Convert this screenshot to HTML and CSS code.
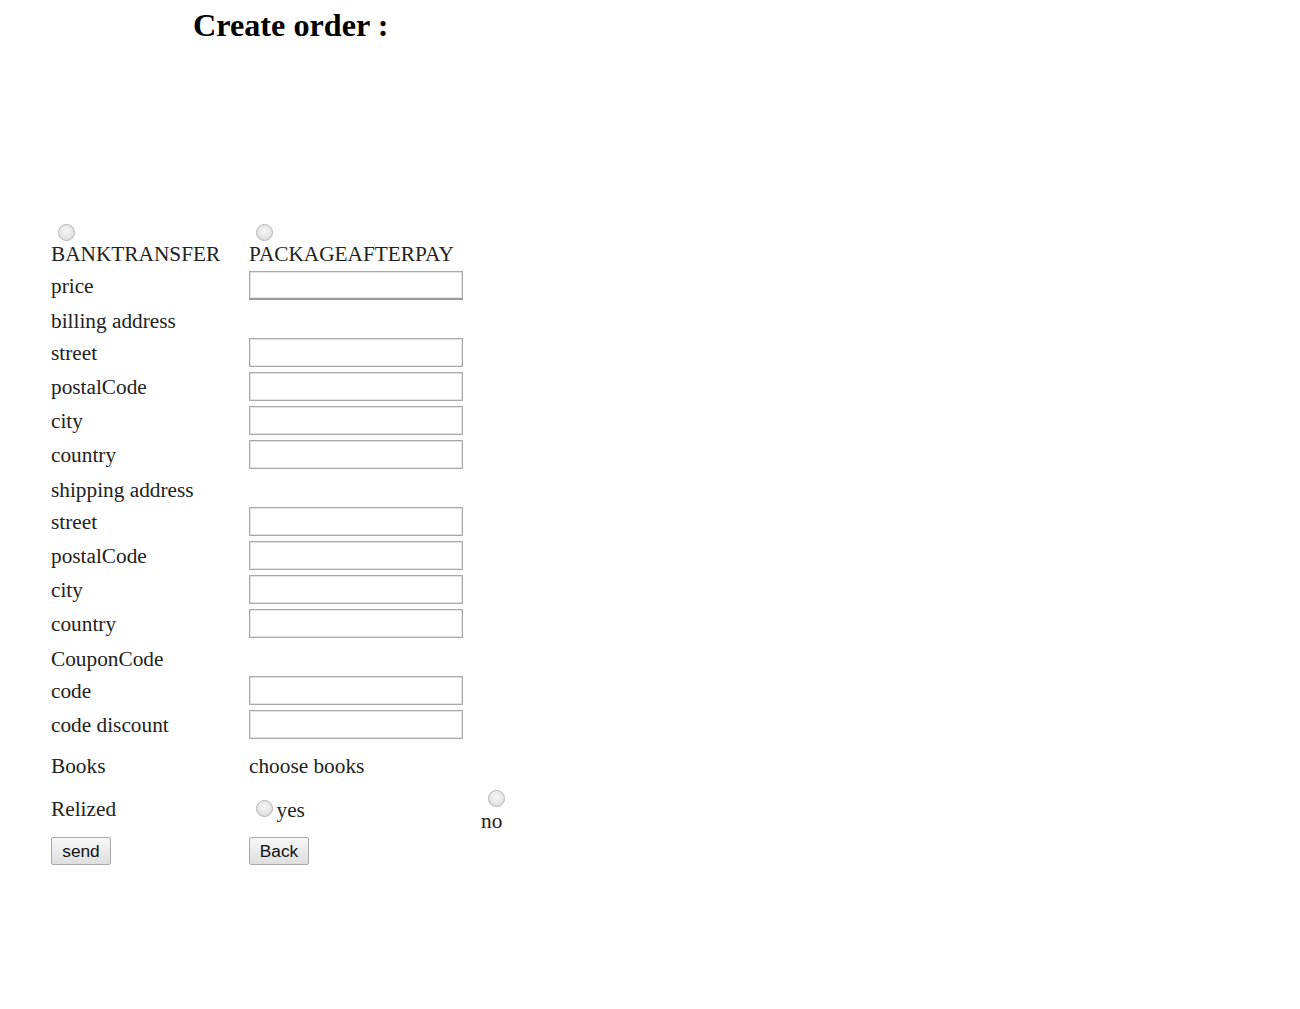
FILE: index.html
```html
<!DOCTYPE html>
<html>
<head>
<meta charset="utf-8">
<title>Create order</title>
<link rel="stylesheet" href="styles.css">
</head>
<body>
<h2 class="title">Create order :</h2>
<form class="form">
  <div class="row row-pay">
    <div class="cell"><span class="radio block"></span><span class="line">BANKTRANSFER</span></div>
    <div class="cell"><span class="radio block"></span><span class="line">PACKAGEAFTERPAY</span></div>
  </div>
  <div class="row"><div class="cell">price</div><div class="cell"><input class="field field-price" type="text"></div></div>
  <div class="row head"><div class="cell">billing address</div></div>
  <div class="row"><div class="cell">street</div><div class="cell"><input class="field" type="text"></div></div>
  <div class="row"><div class="cell">postalCode</div><div class="cell"><input class="field" type="text"></div></div>
  <div class="row"><div class="cell">city</div><div class="cell"><input class="field" type="text"></div></div>
  <div class="row"><div class="cell">country</div><div class="cell"><input class="field" type="text"></div></div>
  <div class="row head"><div class="cell">shipping address</div></div>
  <div class="row"><div class="cell">street</div><div class="cell"><input class="field" type="text"></div></div>
  <div class="row"><div class="cell">postalCode</div><div class="cell"><input class="field" type="text"></div></div>
  <div class="row"><div class="cell">city</div><div class="cell"><input class="field" type="text"></div></div>
  <div class="row"><div class="cell">country</div><div class="cell"><input class="field" type="text"></div></div>
  <div class="row head"><div class="cell">CouponCode</div></div>
  <div class="row"><div class="cell">code</div><div class="cell"><input class="field" type="text"></div></div>
  <div class="row"><div class="cell">code discount</div><div class="cell"><input class="field" type="text"></div></div>
  <div class="row books"><div class="cell">Books</div><div class="cell">choose books</div></div>
  <div class="row relized">
    <div class="cell cell-up">Relized</div>
    <div class="cell cell-up cell-yes"><span class="radio inline"></span><span class="yes">yes</span></div>
    <div class="cell cell-no"><span class="radio block"></span><span class="line">no</span></div>
  </div>
  <div class="row buttons">
    <div class="cell"><button type="button" class="btn">send</button></div>
    <div class="cell"><button type="button" class="btn">Back</button></div>
  </div>
</form>
</body>
</html>
```
FILE: styles.css
```css
html, body {
  margin: 0;
  padding: 0;
  background: #fff;
}
body {
  font-family: "Liberation Serif", "Times New Roman", serif;
  font-size: 21.3px;
  color: #222;
}
.title {
  margin: 0;
  padding: 7px 0 0 193px;
  font-size: 32.2px;
  line-height: 36px;
  font-weight: bold;
  color: #000;
}
.form {
  display: flex;
  flex-direction: column;
  gap: 5px;
  padding: 180.5px 0 0 51px;
}
.row {
  display: grid;
  grid-template-columns: 198px 232px auto;
  align-items: center;
  line-height: 24px;
}
.cell {
  display: flex;
  flex-direction: column;
  align-items: flex-start;
}
.row-pay {
  align-items: start;
}
.head {
  padding-top: 4px;
}
.books {
  padding-top: 9.5px;
}
.relized {
  padding-top: 7px;
}
.cell-up {
  margin-top: -4px;
}
.cell-yes {
  flex-direction: row;
  align-items: center;
}
.cell-no .radio.block {
  margin-bottom: 2.5px;
}
.buttons {
  margin-top: -1px;
}
.line {
  display: block;
}
.radio {
  width: 15px;
  height: 15px;
  border: 1px solid #b3b3b3;
  border-radius: 50%;
  background: radial-gradient(circle at 50% 40%, #f6f6f6 0%, #e6e6e6 55%, #d4d4d4 100%);
  box-sizing: content-box;
  flex: none;
}
.radio.block {
  margin: 0 0 1.5px 6.5px;
}
.radio.inline {
  margin: 0 4px 0 6.5px;
  position: relative;
  top: -1px;
}
.yes {
  position: relative;
  top: 1px;
}
.field {
  box-sizing: border-box;
  width: 214px;
  height: 29px;
  margin: 0;
  border: 1px solid #a9a9a9;
  box-shadow: inset 0 0 0 1px #e4e4e4;
  background: #fff;
  padding: 2px 4px;
  font-size: 17px;
}
.field-price {
  border-bottom: 2px solid #9c9c9c;
}
.btn {
  box-sizing: border-box;
  width: 60px;
  height: 28px;
  margin: 0;
  padding: 0 4px;
  border: 1px solid #a8a8a8;
  border-radius: 2px;
  background: linear-gradient(#f7f7f7, #dedede);
  font-family: "Liberation Sans", Arial, sans-serif;
  font-size: 17.3px;
  color: #111;
  line-height: 24px;
}
```
